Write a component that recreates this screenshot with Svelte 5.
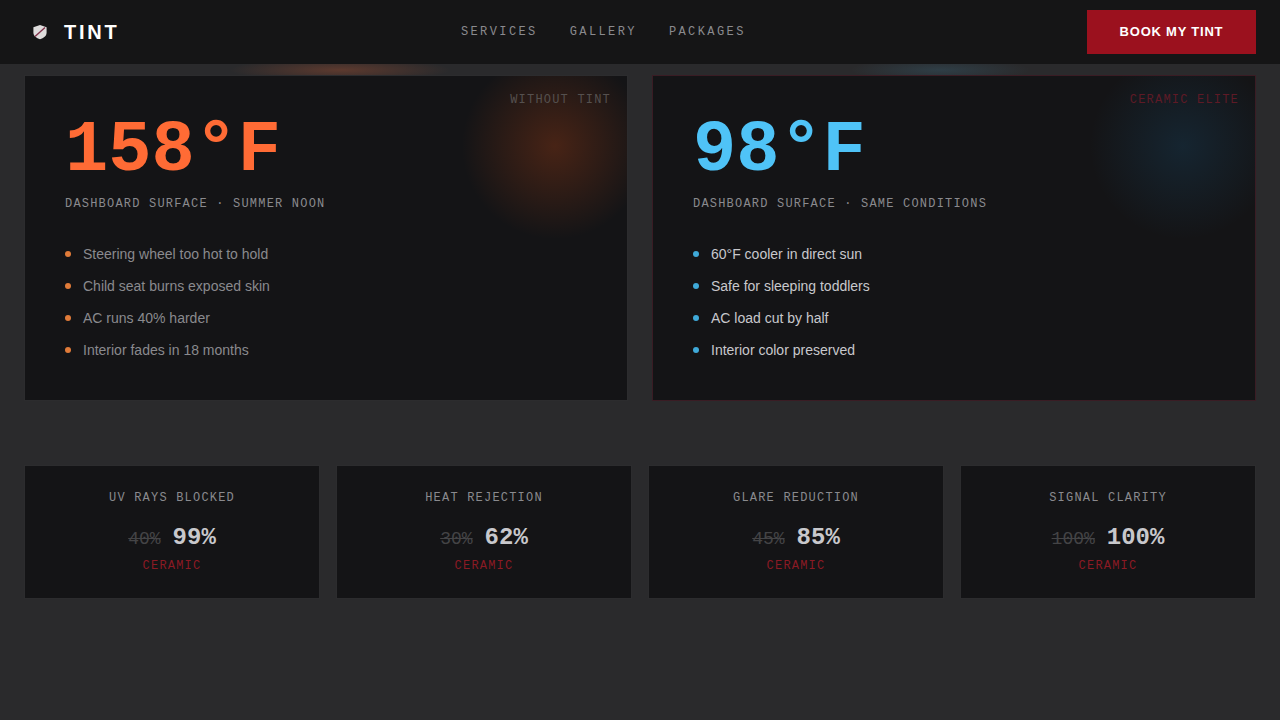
<script>
  const comparisons = [
    {
      key: 'hot',
      tag: 'WITHOUT TINT',
      temp: '158°F',
      note: 'DASHBOARD SURFACE · SUMMER NOON',
      points: ['Steering wheel too hot to hold', 'Child seat burns exposed skin', 'AC runs 40% harder', 'Interior fades in 18 months']
    },
    {
      key: 'cool',
      tag: 'CERAMIC ELITE',
      temp: '98°F',
      note: 'DASHBOARD SURFACE · SAME CONDITIONS',
      points: ['60°F cooler in direct sun', 'Safe for sleeping toddlers', 'AC load cut by half', 'Interior color preserved']
    }
  ];

  const stats = [
    { label: 'UV RAYS BLOCKED', before: '40%', after: '99%' },
    { label: 'HEAT REJECTION', before: '30%', after: '62%' },
    { label: 'GLARE REDUCTION', before: '45%', after: '85%' },
    { label: 'SIGNAL CLARITY', before: '100%', after: '100%' }
  ];
</script>

<nav class="nav">
  <div class="logo">
    <svg class="shield" viewBox="0 0 16 16" width="16" height="16" aria-hidden="true">
      <path d="M8 1 L14.6 3.2 V8.5 C14.6 12 11.5 14.2 8 15.2 C4.5 14.2 1.4 12 1.4 8.5 V3.2 Z" fill="#dedcdc" />
      <path d="M3 12.5 L13 3.5" stroke="#80304a" stroke-width="1.4" />
    </svg>
    <span class="logo-text">TINT</span>
  </div>
  <div class="links">
    <a href="#services">SERVICES</a>
    <a href="#gallery">GALLERY</a>
    <a href="#packages">PACKAGES</a>
  </div>
  <button class="cta">BOOK MY TINT</button>
</nav>

<main class="page">
  <section class="compare">
    {#each comparisons as c}
      <article class="panel {c.key}">
        <div class="glow"></div>
        <span class="tag">{c.tag}</span>
        <div class="temp">{c.temp}</div>
        <div class="note">{c.note}</div>
        <ul>
          {#each c.points as point}
            <li>{point}</li>
          {/each}
        </ul>
      </article>
    {/each}
  </section>

  <section class="stats">
    {#each stats as s}
      <div class="stat">
        <div class="stat-label">{s.label}</div>
        <div class="values">
          <span class="before">{s.before}</span>
          <span class="after">{s.after}</span>
        </div>
        <div class="stat-tier">CERAMIC</div>
      </div>
    {/each}
  </section>
</main>

<style>
  :global(body) {
    background: #2a2a2c;
    font-family: "Liberation Sans", Arial, sans-serif;
    min-height: 100vh;
  }

  .nav {
    height: 64px;
    box-sizing: border-box;
    padding: 0 24px;
    display: flex;
    align-items: center;
    justify-content: space-between;
    background: #151516;
  }

  .logo {
    display: flex;
    align-items: center;
    gap: 16px;
    padding-left: 8px;
  }

  .shield {
    display: block;
  }

  .logo-text {
    font-size: 20px;
    font-weight: 700;
    letter-spacing: 2.8px;
    color: #fff;
  }

  .links {
    display: flex;
    gap: 32px;
  }

  .links a {
    font-family: "Liberation Mono", monospace;
    font-size: 12px;
    letter-spacing: 0.2em;
    color: #8a8a8e;
    text-decoration: none;
  }

  .cta {
    width: 169px;
    height: 44px;
    border: none;
    background: #9b111e;
    color: #fff;
    font-family: "Liberation Sans", Arial, sans-serif;
    font-size: 13px;
    font-weight: 700;
    letter-spacing: 0.78px;
    padding: 0 0 1px;
  }

  .page {
    padding: 11px 24px 0;
    background:
      radial-gradient(110px 12px at 340px 6px, rgba(255, 107, 53, 0.24), transparent),
      radial-gradient(90px 12px at 940px 6px, rgba(79, 195, 247, 0.13), transparent);
    background-repeat: no-repeat;
  }

  .compare {
    display: grid;
    grid-template-columns: 1fr 1fr;
    gap: 24px;
  }

  .panel {
    position: relative;
    overflow: hidden;
    height: 326px;
    box-sizing: border-box;
    padding: 39px 40px 40px;
    background: #141416;
    border: 1px solid #2c2c2e;
  }

  .panel.cool {
    border-color: #3a1c24;
  }

  .glow {
    position: absolute;
    top: -30px;
    right: -28px;
    width: 200px;
    height: 200px;
    border-radius: 50%;
  }

  .hot .glow {
    background: radial-gradient(circle, rgba(255, 90, 20, 0.22), transparent 66%);
  }

  .cool .glow {
    background: radial-gradient(circle, rgba(30, 140, 210, 0.14), transparent 66%);
  }

  .tag {
    position: absolute;
    top: 17px;
    right: 16px;
    font-family: "Liberation Mono", monospace;
    font-size: 12px;
    letter-spacing: 0.1em;
    color: #55504e;
  }

  .cool .tag {
    color: #5e1a26;
  }

  .temp {
    font-family: "Liberation Mono", monospace;
    font-size: 72px;
    font-weight: 700;
    line-height: 72px;
  }

  .hot .temp {
    color: #ff6b35;
  }

  .cool .temp {
    color: #4fc3f7;
  }

  .note {
    margin-top: 10px;
    font-family: "Liberation Mono", monospace;
    font-size: 12px;
    letter-spacing: 0.1em;
    color: #8a8a8e;
  }

  ul {
    list-style: none;
    margin: 27px 0 0;
    padding: 0;
  }

  li {
    display: flex;
    align-items: center;
    gap: 12px;
    height: 32px;
    font-size: 14px;
    color: #8a8a8e;
  }

  li::before {
    content: '';
    width: 6px;
    height: 6px;
    border-radius: 50%;
    background: #e07b39;
  }

  .cool li {
    color: #c8c8cc;
  }

  .cool li::before {
    background: #3fa9d8;
  }

  .stats {
    margin-top: 64px;
    display: grid;
    grid-template-columns: repeat(4, 1fr);
    gap: 16px;
  }

  .stat {
    box-sizing: border-box;
    height: 134px;
    padding: 25px 24px 24px;
    background: #141416;
    border: 1px solid #2c2c2e;
    text-align: center;
    font-family: "Liberation Mono", monospace;
  }

  .stat-label {
    font-size: 12px;
    letter-spacing: 0.1em;
    color: #8a8a8e;
  }

  .values {
    margin-top: 19px;
    display: flex;
    justify-content: center;
    align-items: baseline;
    gap: 12px;
  }

  .before {
    font-size: 18px;
    color: #444446;
    text-decoration: line-through;
  }

  .after {
    font-size: 24px;
    font-weight: 700;
    color: #c8c8cc;
  }

  .stat-tier {
    margin-top: 8px;
    font-size: 12px;
    letter-spacing: 0.1em;
    color: #8b1a24;
  }
</style>
